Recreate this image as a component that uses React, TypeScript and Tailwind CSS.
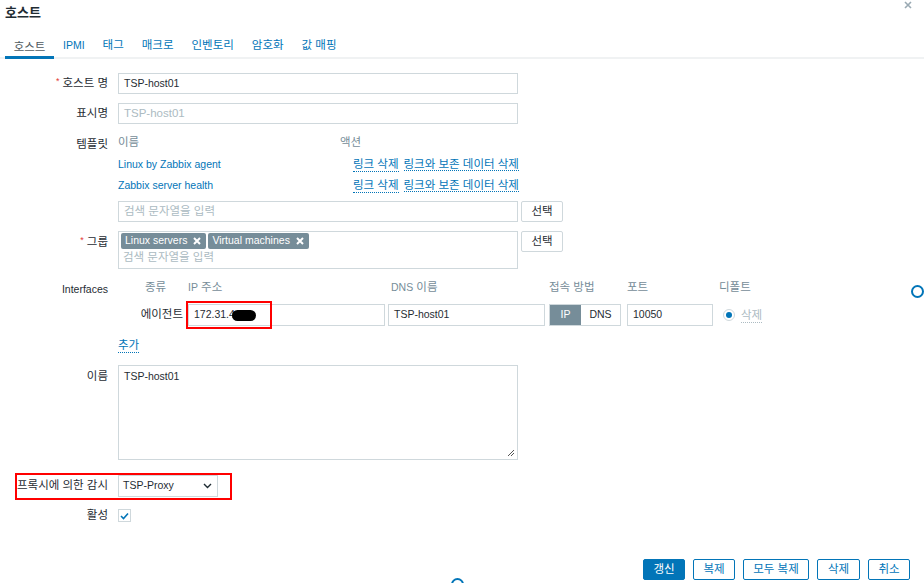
import React from 'react';

const font = { fontFamily: '"Liberation Sans", "Noto Sans CJK KR", Arial, sans-serif' };

// latin text is drawn smaller than hangul
function L({ children }: { children: React.ReactNode }) {
  return <span className="text-[10.5px]">{children}</span>;
}

function Label({ children, req }: { children: React.ReactNode; req?: boolean }) {
  return (
    <div className="w-[108px] shrink-0 text-right text-[#1f2c33] whitespace-nowrap">
      {req && <span className="text-[#e33734] mr-[3px] text-[9px] align-top">*</span>}
      {children}
    </div>
  );
}

function Input({ value, placeholder, className = '' }: { value?: string; placeholder?: string; className?: string }) {
  return (
    <div className={`h-[21px] border border-[#cfd8dc] bg-white flex items-center px-[5px] ${className}`}>
      {value ? (
        <span className="text-[#1f2c33] text-[10.5px]">{value}</span>
      ) : (
        <span className="text-[#acbbc2]">{placeholder}</span>
      )}
    </div>
  );
}

function GrayBtn({ children }: { children: React.ReactNode }) {
  return (
    <div className="h-[21px] w-[42px] border border-[#cfd8dc] rounded-[2px] flex items-center justify-center text-[#1f2c33] bg-white">
      {children}
    </div>
  );
}

function Tag({ children }: { children: React.ReactNode }) {
  return (
    <div className="h-[16px] bg-[#768d99] text-white flex items-center pl-[4px] pr-[5px] gap-[6px] rounded-[2px] text-[10.5px]">
      <span>{children}</span>
      <svg width="8" height="8" viewBox="0 0 8 8">
        <path d="M1 1L7 7M7 1L1 7" stroke="white" strokeWidth="2" />
      </svg>
    </div>
  );
}

function DotLink({ children }: { children: React.ReactNode }) {
  return <span className="text-[#0275b8] border-b border-dotted border-[#0275b8] leading-[14px]">{children}</span>;
}

function BlueBtn({ children, primary, w }: { children: React.ReactNode; primary?: boolean; w: string }) {
  return (
    <div
      className={`h-[21px] ${w} rounded-[2px] border flex items-center justify-center ${
        primary ? 'bg-[#0275b8] border-[#0275b8] text-white' : 'bg-white border-[#0275b8] text-[#0275b8]'
      }`}
    >
      {children}
    </div>
  );
}

export default function App() {
  const tabs = ['태그', '매크로', '인벤토리', '암호화', '값 매핑'];
  const templates = ['Linux by Zabbix agent', 'Zabbix server health'];
  return (
    <div className="relative w-[924px] h-[583px] overflow-hidden bg-white text-[11.5px]" style={font}>
      {/* header */}
      <div className="flex items-center justify-between h-[24px] pl-[5px] pr-[12px]">
        <div className="text-[13px] font-bold text-[#1f2c33] mt-[1px]">호스트</div>
        <svg width="8" height="8" viewBox="0 0 8 8" className="-mt-[14px]">
          <path d="M1 1L7 7M7 1L1 7" stroke="#9aaab3" strokeWidth="1.6" />
        </svg>
      </div>

      {/* tabs */}
      <div className="mt-[13px] flex items-end h-[22px] border-b-[2px] border-[#f0f2f3]">
        <div className="ml-[5px] w-[49px] h-full flex items-start justify-center text-[#4f5a60] border-b-[3px] border-[#0275b8] -mb-[2px]">
          호스트
        </div>
        <div className="flex items-start h-full gap-[18px] ml-[9px] text-[#0275b8]">
          <span className="text-[10.5px] pt-[1px]">IPMI</span>
          {tabs.map((t) => (
            <span key={t}>{t}</span>
          ))}
        </div>
      </div>

      {/* form */}
      <div className="flex flex-col">
        <div className="mt-[14px] flex items-center gap-[10px]">
          <Label req>호스트 명</Label>
          <Input value="TSP-host01" className="w-[400px]" />
        </div>
        <div className="mt-[9px] flex items-center gap-[10px]">
          <Label>표시명</Label>
          <Input placeholder="TSP-host01" className="w-[400px]" />
        </div>

        {/* templates */}
        <div className="mt-[12px] flex gap-[10px]">
          <Label>템플릿</Label>
          <div className="w-[445px] flex flex-col">
            <div className="flex h-[14px] items-center text-[#768d99]">
              <span className="w-[222px]">이름</span>
              <span>액션</span>
            </div>
            {templates.map((n, i) => (
              <div key={n} className={`flex h-[21px] items-center ${i === 0 ? 'mt-[4px]' : ''}`}>
                <span className="w-[235px] text-[#0275b8] text-[10.5px]">{n}</span>
                <DotLink>링크 삭제</DotLink>
                <span className="ml-[5px]">
                  <DotLink>링크와 보존 데이터 삭제</DotLink>
                </span>
              </div>
            ))}
            <div className="mt-[5px] flex items-center gap-[3px]">
              <Input placeholder="검색 문자열을 입력" className="w-[400px]" />
              <GrayBtn>선택</GrayBtn>
            </div>
          </div>
        </div>

        {/* groups */}
        <div className="mt-[9px] flex gap-[10px]">
          <div className="pt-[3px]">
            <Label req>그룹</Label>
          </div>
          <div className="flex items-start gap-[3px]">
            <div className="w-[400px] h-[38px] border border-[#cfd8dc] px-[2px] pt-[1px]">
              <div className="flex gap-[2px]">
                <Tag>Linux servers</Tag>
                <Tag>Virtual machines</Tag>
              </div>
              <div className="text-[#acbbc2] pl-[2px]">검색 문자열을 입력</div>
            </div>
            <GrayBtn>선택</GrayBtn>
          </div>
        </div>

        {/* interfaces */}
        <div className="mt-[12px] flex gap-[10px]">
          <div>
            <Label>
              <L>Interfaces</L>
            </Label>
          </div>
          <div className="flex flex-col">
            <div className="flex h-[14px] items-center text-[#768d99]">
              <span className="w-[70px] pl-[27px]">종류</span>
              <span className="w-[200px]">
                <L>IP</L> 주소
              </span>
              <span className="w-[161px] pl-[3px]">
                <L>DNS</L> 이름
              </span>
              <span className="w-[78px]">접속 방법</span>
              <span className="w-[92px]">포트</span>
              <span>디폴트</span>
            </div>
            <div className="mt-[9px] flex items-center h-[22px]">
              <span className="w-[70px] text-right pr-[5px] text-[#1f2c33] whitespace-nowrap">에이전트</span>
              <div className="relative">
                <Input value="172.31.4" className="w-[197px] h-[22px]" />
                <div className="absolute left-[44px] top-[6px] w-[24px] h-[11px] rounded-full bg-black" />
                <div className="absolute -left-[2px] -top-[3px] w-[86px] h-[28px] border-[2.5px] border-[#ff0000]" />
              </div>
              <Input value="TSP-host01" className="w-[157px] h-[22px] ml-[3px]" />
              <div className="ml-[4px] flex h-[22px] w-[72px] border border-[#cfd8dc] text-[10.5px]">
                <div className="w-[31px] bg-[#768d99] text-white flex items-center justify-center">IP</div>
                <div className="flex-1 flex items-center justify-center text-[#1f2c33]">DNS</div>
              </div>
              <Input value="10050" className="w-[86px] h-[22px] ml-[6px]" />
              <div className="ml-[10px] w-[12px] h-[12px] rounded-full border border-[#cfd8dc] flex items-center justify-center">
                <div className="w-[6px] h-[6px] rounded-full bg-[#0275b8]" />
              </div>
              <span className="ml-[6px] text-[#acbbc2] border-b border-dotted border-[#acbbc2] leading-[14px]">삭제</span>
            </div>
            <div className="mt-[12px] h-[14px] flex items-center">
              <DotLink>추가</DotLink>
            </div>
          </div>
        </div>

        {/* name textarea */}
        <div className="mt-[13px] flex gap-[10px]">
          <div className="pt-[3px]">
            <Label>이름</Label>
          </div>
          <div className="relative w-[400px] h-[95px] border border-[#cfd8dc] px-[5px] pt-[3px] text-[#1f2c33] text-[10.5px]">
            TSP-host01
            <svg width="8" height="8" viewBox="0 0 8 8" className="absolute right-[2px] bottom-[2px]">
              <path d="M7 1L1 7M7 4L4 7" stroke="#555" strokeWidth="1" />
            </svg>
          </div>
        </div>

        {/* proxy */}
        <div className="relative mt-[15px] flex items-center gap-[10px]">
          <Label>프록시에 의한 감시</Label>
          <div className="w-[100px] h-[22px] border border-[#cfd8dc] flex items-center justify-between pl-[4px] pr-[5px] text-[#1f2c33] text-[10.5px]">
            <span>TSP-Proxy</span>
            <svg width="9" height="6" viewBox="0 0 9 6">
              <path d="M1 1L4.5 4.5L8 1" stroke="#1f2c33" strokeWidth="1.4" fill="none" />
            </svg>
          </div>
          <div className="absolute left-[15px] -top-[2px] w-[217px] h-[27px] border-[2.5px] border-[#ff0000]" />
        </div>

        {/* active */}
        <div className="mt-[10px] flex items-center gap-[10px]">
          <Label>활성</Label>
          <div className="w-[13px] h-[13px] border border-[#cfd8dc] flex items-center justify-center">
            <svg width="9" height="8" viewBox="0 0 9 8">
              <path d="M1 4L3.5 6.5L8 1.5" stroke="#0275b8" strokeWidth="1.6" fill="none" />
            </svg>
          </div>
        </div>

        {/* buttons */}
        <div className="mt-[35px] flex justify-end gap-[8px] pr-[14px]">
          <BlueBtn primary w="w-[42px]">갱신</BlueBtn>
          <BlueBtn w="w-[42px]">복제</BlueBtn>
          <BlueBtn w="w-[66px]">모두 복제</BlueBtn>
          <BlueBtn w="w-[43px]">삭제</BlueBtn>
          <BlueBtn w="w-[42px]">취소</BlueBtn>
        </div>
      </div>

      {/* overlay circles */}
      <div className="absolute left-[911px] top-[285px] w-[13px] h-[13px] rounded-full border-[2px] border-[#0275b8]" />
      <div className="absolute left-[451px] top-[578px] w-[13px] h-[13px] rounded-full border-[2px] border-[#0275b8]" />
    </div>
  );
}
